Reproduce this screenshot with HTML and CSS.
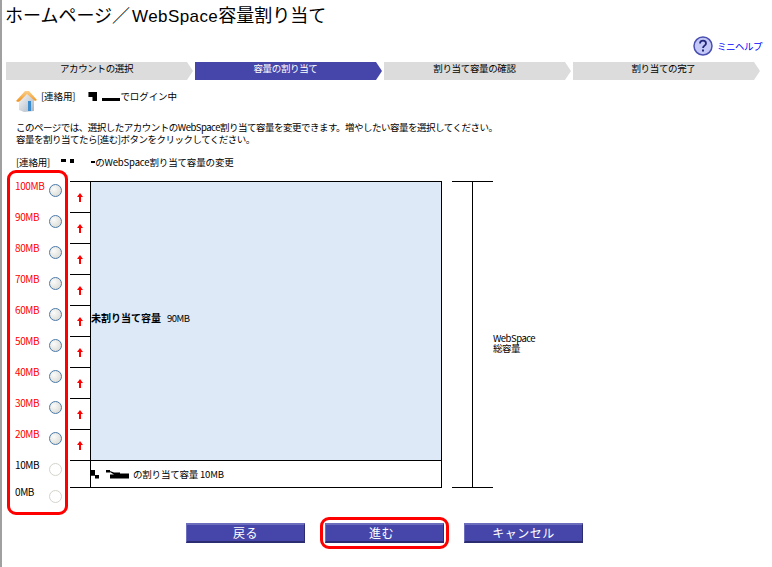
FILE: index.html
```html
<!DOCTYPE html>
<html lang="ja">
<head>
<meta charset="utf-8">
<title>ホームページ／WebSpace容量割り当て</title>
<link rel="stylesheet" href="styles.css">
</head>
<body>
<div class="page">
  <h1 class="title">ホームページ／<span class="latin">WebSpace</span>容量割り当て</h1>
  <div class="help-row">
    <svg class="help-icon" width="20" height="20" viewBox="0 0 20 20"><circle cx="10" cy="10" r="9" fill="#c4c8f6" stroke="#4a4fb0" stroke-width="1.5"/><path d="M7 7.5C7 5.5 8.5 4.6 10 4.6S13 5.6 13 7.4C13 9.5 10 9.8 10 12" fill="none" stroke="#23277a" stroke-width="1.8"/><rect x="9" y="13.5" width="2" height="2" fill="#23277a"/></svg>
    <a class="help-link" href="#">ミニヘルプ</a>
  </div>
  <ol class="steps">
    <li class="step">アカウントの選択</li>
    <li class="step step-current">容量の割り当て</li>
    <li class="step">割り当て容量の確認</li>
    <li class="step">割り当ての完了</li>
  </ol>
  <div class="login-row">
    <svg class="home-icon" width="24" height="22" viewBox="0 0 24 22"><defs><linearGradient id="wall" x1="0" y1="0" x2="1" y2="1"><stop offset="0" stop-color="#fafbfc"/><stop offset="1" stop-color="#aab4c0"/></linearGradient><linearGradient id="roof" x1="0" y1="0" x2="0" y2="1"><stop offset="0" stop-color="#fbd08a"/><stop offset="1" stop-color="#f0921e"/></linearGradient></defs><path d="M3 9L11 3L18 9V21L8 22L3 20Z" fill="url(#wall)"/><rect x="12" y="11" width="3" height="10" fill="#3a8ccc"/><path d="M0 11L9 1H13L21 10L19 11L11 4L4 11L2 12Z" fill="url(#roof)"/></svg>
    <p class="login-text">[連絡用]<span class="redact r1"></span><span class="redact r2"></span>でログイン中</p>
  </div>
  <p class="intro">このページでは、選択したアカウントのWebSpace割り当て容量を変更できます。増やしたい容量を選択してください。<br>容量を割り当てたら[進む]ボタンをクリックしてください。</p>
  <p class="heading">[連絡用]<span class="redact r3"></span><span class="redact r3b"></span><span class="redact r4"></span>のWebSpace割り当て容量の変更</p>
  <div class="chart">
    <div class="scale">
      <label class="opt"><span>100MB</span><input type="radio" name="cap"></label>
      <label class="opt"><span>90MB</span><input type="radio" name="cap"></label>
      <label class="opt"><span>80MB</span><input type="radio" name="cap"></label>
      <label class="opt"><span>70MB</span><input type="radio" name="cap"></label>
      <label class="opt"><span>60MB</span><input type="radio" name="cap"></label>
      <label class="opt"><span>50MB</span><input type="radio" name="cap"></label>
      <label class="opt"><span>40MB</span><input type="radio" name="cap"></label>
      <label class="opt"><span>30MB</span><input type="radio" name="cap"></label>
      <label class="opt"><span>20MB</span><input type="radio" name="cap"></label>
      <label class="opt opt-off"><span>10MB</span><input type="radio" name="cap" disabled></label>
      <label class="opt opt-off"><span>0MB</span><input type="radio" name="cap" disabled></label>
    </div>
    <div class="bar">
      <div class="arrows">
        <div class="arrow"><svg width="6" height="9" viewBox="0 0 6 9"><path d="M3 0L6 4H4V9H2V4H0Z" fill="#f00"/></svg></div>
        <div class="arrow"><svg width="6" height="9" viewBox="0 0 6 9"><path d="M3 0L6 4H4V9H2V4H0Z" fill="#f00"/></svg></div>
        <div class="arrow"><svg width="6" height="9" viewBox="0 0 6 9"><path d="M3 0L6 4H4V9H2V4H0Z" fill="#f00"/></svg></div>
        <div class="arrow"><svg width="6" height="9" viewBox="0 0 6 9"><path d="M3 0L6 4H4V9H2V4H0Z" fill="#f00"/></svg></div>
        <div class="arrow"><svg width="6" height="9" viewBox="0 0 6 9"><path d="M3 0L6 4H4V9H2V4H0Z" fill="#f00"/></svg></div>
        <div class="arrow"><svg width="6" height="9" viewBox="0 0 6 9"><path d="M3 0L6 4H4V9H2V4H0Z" fill="#f00"/></svg></div>
        <div class="arrow"><svg width="6" height="9" viewBox="0 0 6 9"><path d="M3 0L6 4H4V9H2V4H0Z" fill="#f00"/></svg></div>
        <div class="arrow"><svg width="6" height="9" viewBox="0 0 6 9"><path d="M3 0L6 4H4V9H2V4H0Z" fill="#f00"/></svg></div>
        <div class="arrow"><svg width="6" height="9" viewBox="0 0 6 9"><path d="M3 0L6 4H4V9H2V4H0Z" fill="#f00"/></svg></div>
        <div class="arrow-spacer"></div>
      </div>
      <div class="fill">
        <div class="free"><b>未割り当て容量</b><span>90MB</span></div>
        <div class="used"><span class="redact r5"></span><span class="redact r6"></span>の割り当て容量 10MB</div>
      </div>
    </div>
    <div class="total">
      <div class="bracket"></div>
      <div class="total-label">WebSpace<br>総容量</div>
    </div>
    <div class="callout-scale"></div>
  </div>
  <div class="actions">
    <button class="btn" type="button">戻る</button>
    <button class="btn btn-next" type="button">進む</button>
    <button class="btn" type="button">キャンセル</button>
  </div>
</div>
</body>
</html>
```
FILE: styles.css
```css
* { box-sizing: border-box; }
html, body { margin: 0; padding: 0; background: #fff; }
body {
  width: 772px;
  height: 567px;
  overflow: hidden;
  color: #000;
  font-family: "Noto Sans CJK JP", "Liberation Sans", sans-serif;
  font-size: 9.5px;
  letter-spacing: -0.5px;
  line-height: 12px;
}
.page {
  height: 567px;
  padding: 0 12px 0 4px;
  border-left: 2px solid #a0a0a0;
}
p { margin: 0; }
.title {
  margin: 0 0 0 -1px;
  height: 37px;
  font-size: 18px;
  font-weight: 400;
  line-height: 29px;
  letter-spacing: 0;
  white-space: nowrap;
}
.latin {
  margin-left: 2px;
  letter-spacing: 0.4px;
  font-family: "Liberation Sans", sans-serif;
  font-size: 17px;
}
.help-row {
  height: 25px;
  display: flex;
  justify-content: flex-end;
  align-items: center;
  gap: 4px;
  padding-bottom: 7px;
  margin-right: -2px;
}
.help-link { color: #00f; text-decoration: none; }
.steps {
  list-style: none;
  margin: 0;
  padding: 0;
  display: grid;
  grid-template-columns: repeat(4, 187px);
  column-gap: 2px;
  height: 18px;
}
.step {
  background: #dcdcdc;
  clip-path: polygon(0 0, calc(100% - 6px) 0, 100% 50%, calc(100% - 6px) 100%, 0 100%);
  text-align: center;
  line-height: 12px;
  letter-spacing: -0.35px;
  padding-right: 6px;
}
.step-current { background: #4646aa; color: #fff; }
.login-row {
  display: flex;
  align-items: flex-start;
  gap: 1px;
  margin: 8px 0 0 10px;
  height: 33px;
}
.home-icon { margin-top: 2px; }
.login-text { padding-top: 2px; letter-spacing: -0.1px; }
.redact { display: inline-block; background: #000; vertical-align: baseline; }
.r1 {
  width: 9px;
  height: 9px;
  margin-left: 13px;
  vertical-align: -1px;
  clip-path: polygon(0 0, 100% 0, 100% 100%, 45% 100%, 45% 55%, 0 55%);
}
.r2 { width: 18px; height: 3px; margin-left: 5px; vertical-align: -1px; }
.r3 { width: 5px; height: 3px; margin-left: 11px; vertical-align: 4px; }
.r3b { width: 4px; height: 4px; margin-left: 4px; vertical-align: 3px; }
.r4 { width: 4px; height: 2px; margin-left: 17px; vertical-align: 3px; }
.r5 {
  flex: none;
  width: 8px;
  height: 9px;
  clip-path: polygon(0 0, 50% 0, 50% 60%, 100% 60%, 100% 100%, 50% 100%, 50% 70%, 0 70%);
}
.r6 {
  flex: none;
  width: 23px;
  height: 9px;
  margin: 0 4px 0 7px;
  clip-path: polygon(0 0, 4px 0, 4px 3px, 0 3px, 0 0, 8px 3px, 14px 3px, 14px 4px, 23px 4px, 23px 9px, 4px 9px, 4px 5px, 8px 5px);
}
.intro { margin: 0 0 0 10px; height: 35px; white-space: nowrap; }
.heading { margin-left: 10px; height: 12px; white-space: nowrap; letter-spacing: -0.15px; }
.chart {
  position: relative;
  display: flex;
  height: 323px;
  margin-top: 13px;
}
.scale {
  width: 64px;
  padding: 0 8px 0 9px;
}
.opt {
  height: 31px;
  display: flex;
  color: #f00;
  justify-content: space-between;
  font-size: 10px;
  letter-spacing: -0.4px;
  line-height: 11px;
}
.opt span { margin-top: -1px; }
.opt:last-child { margin-top: -4px; }
.opt-off { color: #000; }
.opt input {
  appearance: none;
  width: 13px;
  height: 13px;
  margin: 3px 0 0;
  border-radius: 50%;
  border: 1px solid #4a7aa8;
  background: radial-gradient(circle at 35% 35%, #fbfbfb, #d4d4ce);
}
.opt input:disabled { border-color: #d4d4cc; background: #fff; }
.bar {
  display: flex;
  flex: none;
  width: 372px;
  height: 307px;
  border-top: 1px solid #000;
  border-bottom: 1px solid #000;
  border-right: 1px solid #000;
}
.arrows {
  width: 21px;
  display: flex;
  flex-direction: column;
  border-right: 1px solid #000;
}
.arrow {
  height: 31px;
  border-bottom: 1px solid #000;
  display: flex;
  justify-content: center;
  align-items: flex-end;
  padding-bottom: 10px;
}
.arrow-spacer { flex: 1; }
.fill { flex: 1; display: flex; flex-direction: column; }
.free {
  flex: 1;
  background: #dde9f7;
  display: flex;
  align-items: center;
  gap: 6px;
  padding-bottom: 6px;
  border-bottom: 1px solid #000;
}
.free b { font-weight: 700; font-size: 10px; letter-spacing: 0; }
.used { height: 26px; display: flex; align-items: center; white-space: pre; letter-spacing: -0.2px; }
.total {
  display: flex;
  flex: none;
  margin-left: 10px;
  height: 307px;
}
.bracket {
  width: 41px;
  height: 307px;
  border-top: 1px solid #000;
  border-bottom: 1px solid #000;
  background: linear-gradient(#000, #000) center / 1px 100% no-repeat;
}
.total-label { margin: 152px 0 0 0; line-height: 10px; white-space: nowrap; }
.callout-scale {
  position: absolute;
  left: 1px;
  top: -11px;
  width: 61px;
  height: 345px;
  border: 3px solid #f00;
  border-radius: 9px;
  pointer-events: none;
}
.actions {
  display: flex;
  gap: 20px;
  margin: 19px 0 0 180px;
}
.btn {
  width: 119px;
  height: 20px;
  padding: 0;
  font: inherit;
  font-size: 12px;
  line-height: 16px;
  letter-spacing: 0.5px;
  color: #fff;
  background: #4646aa;
  border: 0;
  border-top: 2px solid #6d6dbd;
  border-left: 1px solid #6d6dbd;
  border-right: 1px solid #2c2c70;
  border-bottom: 2px solid #2c2c70;
}
.btn-next { position: relative; padding-right: 6px; }
.btn-next::after {
  content: "";
  box-sizing: border-box;
  position: absolute;
  left: -6px;
  top: -8px;
  width: 129px;
  height: 32px;
  border: 3px solid #f00;
  border-radius: 9px;
}
```
